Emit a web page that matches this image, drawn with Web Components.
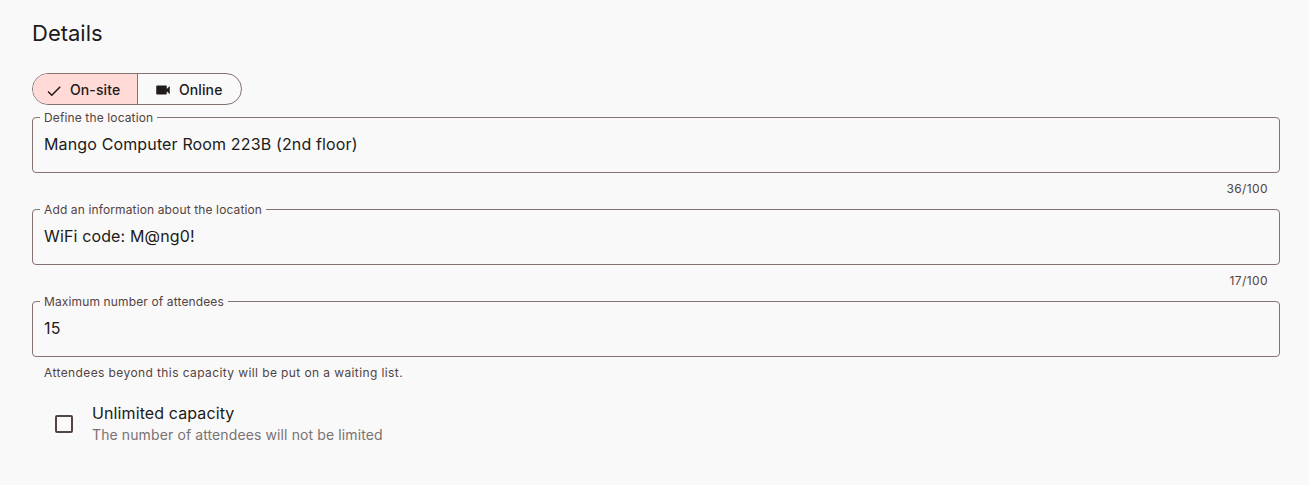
<!DOCTYPE html>
<html lang="en">
<head>
<meta charset="utf-8">
<title>Details</title>
<style>
  html, body { margin: 0; height: 100%; background: #f9f9f9; }
  body { font-family: Inter, "Liberation Sans", sans-serif; color: #201a19; }
</style>
</head>
<body>
<event-details>
  <span slot="title">Details</span>
  <segment-group>
    <segment-button selected>On-site</segment-button>
    <segment-button icon="video">Online</segment-button>
  </segment-group>
  <text-field label="Define the location" counter="36/100">Mango Computer Room 223B (2nd floor)</text-field>
  <text-field label="Add an information about the location" counter="17/100">WiFi code: M@ng0!</text-field>
  <text-field label="Maximum number of attendees" hint="Attendees beyond this capacity will be put on a waiting list.">15</text-field>
  <check-row label="Unlimited capacity" sub="The number of attendees will not be limited"></check-row>
</event-details>

<script>
class EventDetails extends HTMLElement {
  connectedCallback() {
    this.attachShadow({ mode: "open" });
    this.shadowRoot.innerHTML = `
      <style>
        :host {
          display: flex;
          flex-direction: column;
          padding: 0 29px 0 32px;
          font-family: Inter, "Liberation Sans", sans-serif;
        }
        h2 {
          margin: 0;
          padding-top: 19px;
          height: 73px;
          box-sizing: border-box;
          font-size: 22px;
          line-height: 28px;
          font-weight: 400;
          color: #201a19;
        }
      </style>
      <h2><slot name="title"></slot></h2>
      <slot></slot>
    `;
  }
}

class SegmentGroup extends HTMLElement {
  connectedCallback() {
    this.attachShadow({ mode: "open" });
    this.shadowRoot.innerHTML = `
      <style>
        :host {
          display: flex;
          align-self: flex-start;
          height: 32px;
          box-sizing: border-box;
          border: 1px solid #857371;
          border-radius: 16px;
          overflow: hidden;
          margin-bottom: 12px;
        }
      </style>
      <slot></slot>
    `;
  }
}

class SegmentButton extends HTMLElement {
  connectedCallback() {
    const selected = this.hasAttribute("selected");
    const icon = selected
      ? `<svg width="18" height="18" viewBox="0 0 24 24" fill="#201a19" style="margin-top:4px"><path d="M9 16.17 4.83 12l-1.42 1.41L9 19 21 7l-1.41-1.41z"/></svg>`
      : `<svg width="18" height="18" viewBox="0 0 24 24" fill="#201a19" style="margin-top:2px"><path d="M17 10.5V7c0-.55-.45-1-1-1H4c-.55 0-1 .45-1 1v10c0 .55.45 1 1 1h12c.55 0 1-.45 1-1v-3.5l4 4v-11l-4 4z"/></svg>`;
    this.attachShadow({ mode: "open" });
    this.shadowRoot.innerHTML = `
      <style>
        :host {
          display: flex;
          align-items: center;
          gap: 7px;
          box-sizing: border-box;
          width: ${selected ? "105px" : "103px"};
          padding-left: ${selected ? "12px" : "16px"};
          ${selected ? "border-right: 1px solid #857371;" : ""}
          font-size: 14px;
          font-weight: 500;
          letter-spacing: 0.1px;
          color: #201a19;
          background: ${selected ? "#ffdad6" : "transparent"};
        }
      </style>
      ${icon}<slot></slot>
    `;
  }
}

class TextField extends HTMLElement {
  connectedCallback() {
    const counter = this.getAttribute("counter");
    const hint = this.getAttribute("hint");
    this.attachShadow({ mode: "open" });
    this.shadowRoot.innerHTML = `
      <style>
        :host { display: block; margin-bottom: 12px; }
        fieldset {
          box-sizing: border-box;
          height: 56px;
          margin: 0;
          padding: 0 12px 0 7px;
          min-width: 0;
          border: 1px solid #857371;
          border-radius: 4px;
        }
        legend {
          margin: 0;
          padding: 0 4px;
          font-size: 12px;
          line-height: 1px;
          height: 1px;
          letter-spacing: 0.13px;
          color: #534341;
        }
        .value {
          padding: 0 0 0 4px;
          height: 52px;
          display: flex;
          align-items: center;
          font-size: 16px;
          letter-spacing: 0.14px;
          color: #201a19;
        }
        .support {
          display: flex;
          justify-content: space-between;
          height: 24px;
          padding: 8px 12px 0 12px;
          box-sizing: border-box;
          font-size: 12px;
          line-height: 16px;
          letter-spacing: 0.4px;
          color: #534341;
        }
        .counter { margin-left: auto; }
      </style>
      <fieldset>
        <legend>${this.getAttribute("label")}</legend>
        <div class="value"><slot></slot></div>
      </fieldset>
      <div class="support">
        ${hint ? `<span>${hint}</span>` : ""}
        ${counter ? `<span class="counter">${counter}</span>` : ""}
      </div>
    `;
  }
}

class CheckRow extends HTMLElement {
  connectedCallback() {
    this.attachShadow({ mode: "open" });
    this.shadowRoot.innerHTML = `
      <style>
        :host {
          display: flex;
          align-items: center;
          gap: 19px;
          padding: 8px 0 0 23px;
        }
        .box {
          width: 18px;
          height: 18px;
          margin-top: 2px;
          box-sizing: border-box;
          border: 2px solid #534341;
          border-radius: 2px;
          flex: none;
        }
        .label {
          font-size: 16px;
          line-height: 24px;
          letter-spacing: 0.11px;
          color: #201a19;
        }
        .sub {
          font-size: 14px;
          line-height: 20px;
          letter-spacing: 0.11px;
          color: #7a7271;
        }
      </style>
      <div class="box"></div>
      <div>
        <div class="label">${this.getAttribute("label")}</div>
        <div class="sub">${this.getAttribute("sub")}</div>
      </div>
    `;
  }
}

customElements.define("event-details", EventDetails);
customElements.define("segment-group", SegmentGroup);
customElements.define("segment-button", SegmentButton);
customElements.define("text-field", TextField);
customElements.define("check-row", CheckRow);
</script>
</body>
</html>
